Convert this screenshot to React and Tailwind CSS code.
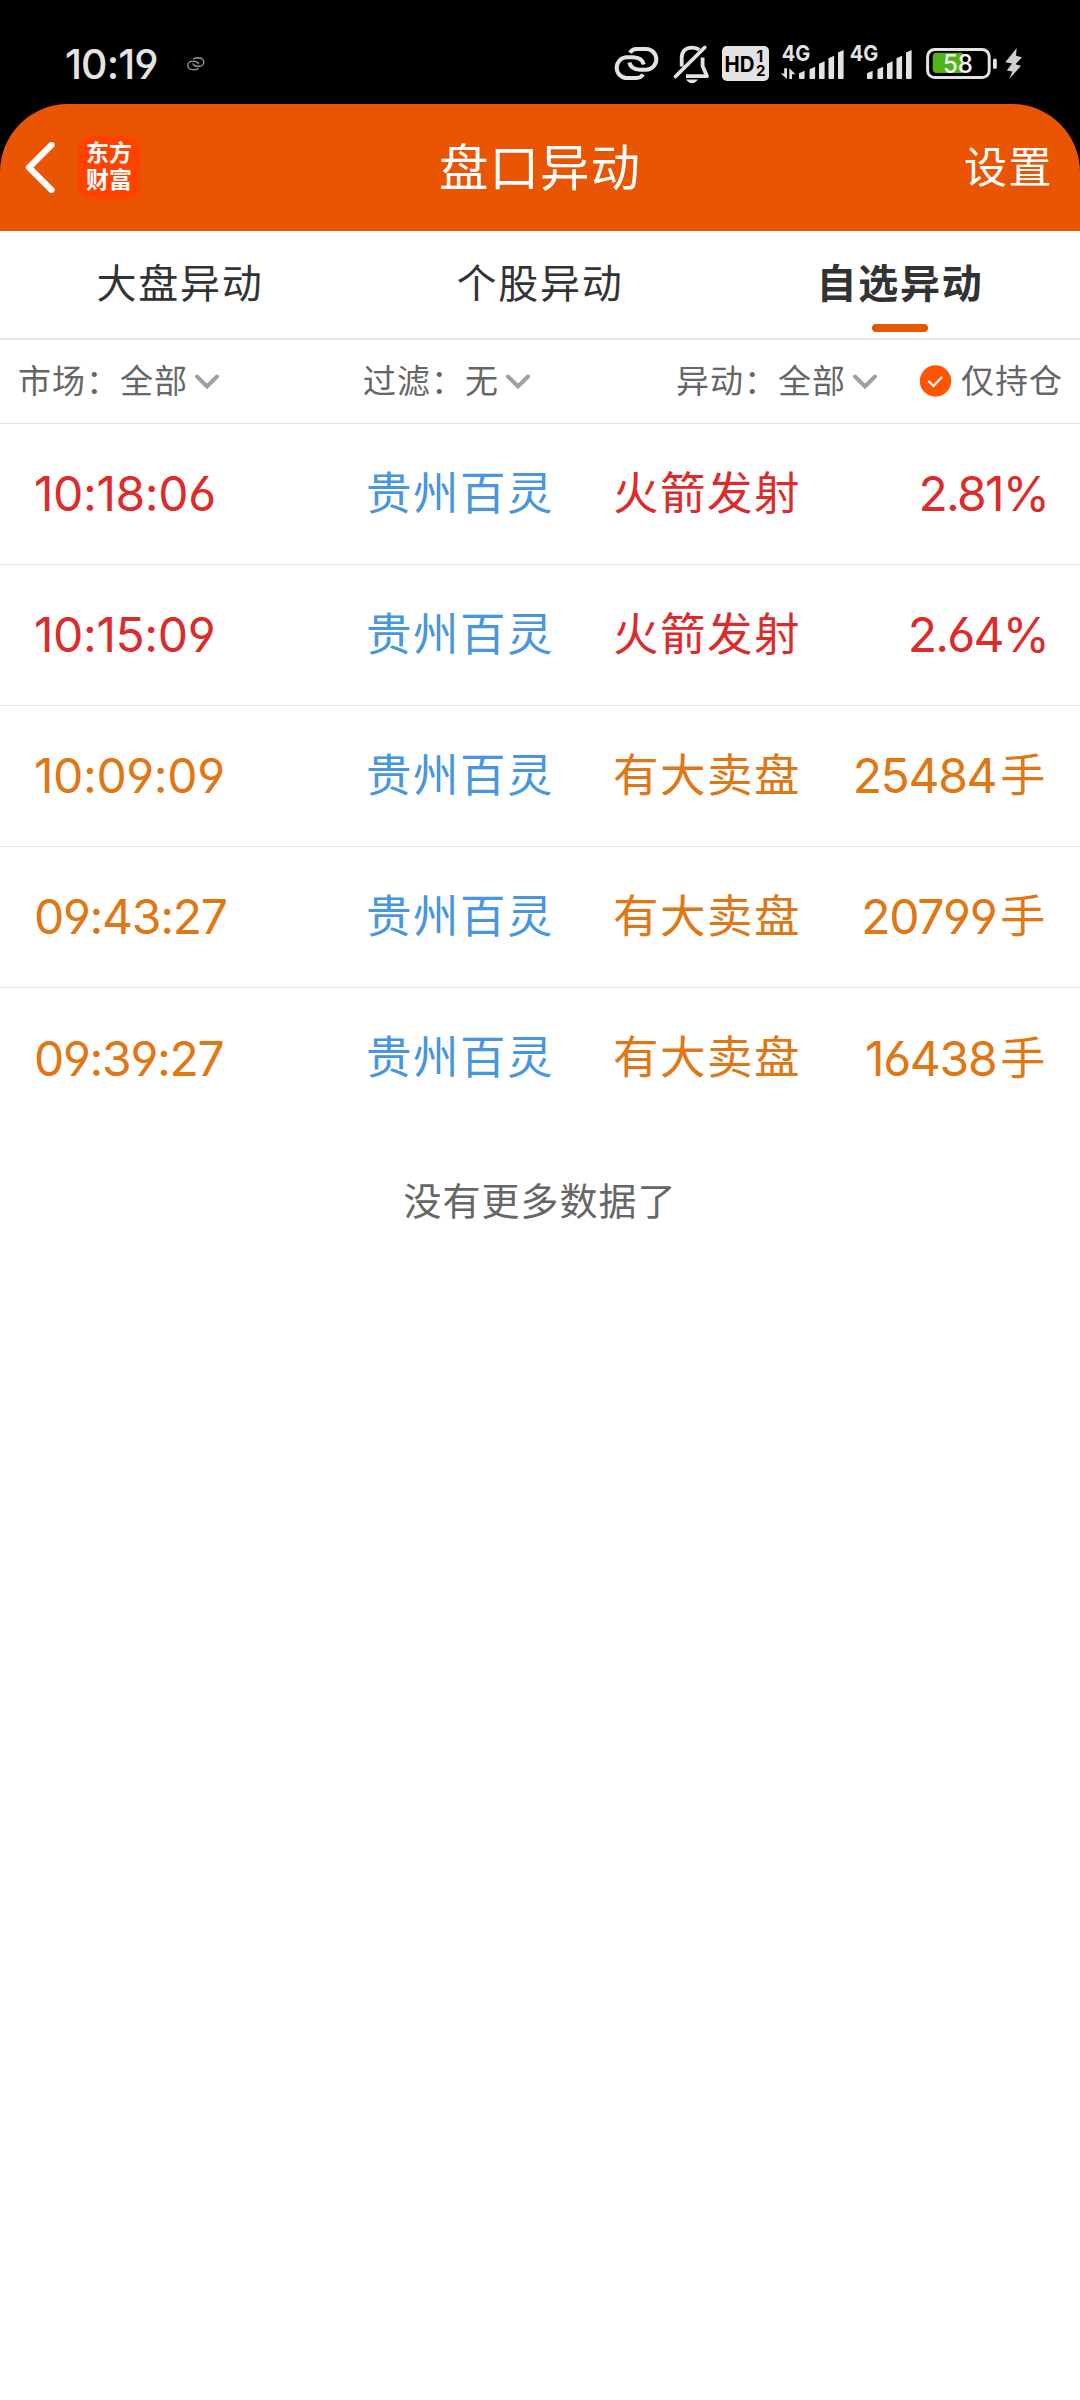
import React, { useState } from 'react';

const tabs = ['大盘异动', '个股异动', '自选异动'];

const rows = [
  { time: '10:18:06', name: '贵州百灵', event: '火箭发射', value: '2.81', unit: '%', type: 'up' },
  { time: '10:15:09', name: '贵州百灵', event: '火箭发射', value: '2.64', unit: '%', type: 'up' },
  { time: '10:09:09', name: '贵州百灵', event: '有大卖盘', value: '25484', unit: '手', type: 'order' },
  { time: '09:43:27', name: '贵州百灵', event: '有大卖盘', value: '20799', unit: '手', type: 'order' },
  { time: '09:39:27', name: '贵州百灵', event: '有大卖盘', value: '16438', unit: '手', type: 'order' },
];

const getTypeColor = (type) => {
  switch (type) {
    case 'up': return 'text-[#dd2b2b]';
    case 'order': return 'text-[#e07614]';
    default: return 'text-[#333333]';
  }
};

const LinkIcon = ({ className, strokeWidth = 4 }) => (
  <svg className={className} viewBox="0 0 50 40" fill="none" stroke="currentColor" strokeWidth={strokeWidth}>
    <path d="M18 8.8Q20 5 24.5 5H34A10.35 10.35 0 0 1 34 25.7H28Q19 25.5 17.3 18.5" />
    <path d="M31 30.4Q29 34 24.5 34H15A10.35 10.35 0 0 1 15 13.3H21Q30 13.5 31.8 20.5" />
  </svg>
);

const BellOffIcon = () => (
  <svg className="ml-[10px] h-10 w-10" viewBox="0 0 40 40" fill="none" stroke="currentColor" strokeWidth="3.8">
    <path d="M9.7 22.5V14C9.7 7 14 3.6 20 3.6C23 3.6 25.5 4.3 27.3 5.8" />
    <path d="M30.6 13.5V22L35 32.2H14" strokeLinejoin="round" />
    <path d="M3.5 32.5L32.7 3.5" strokeLinecap="round" />
    <path d="M14 35.6H26Q23.5 39.2 20 39.2Q16.5 39.2 14 35.6Z" fill="currentColor" stroke="none" />
  </svg>
);

const HdIcon = () => (
  <svg className="ml-[10px] h-10 w-[47px]" viewBox="0 0 47 40">
    <rect y="2" width="47" height="35" rx="5" fill="currentColor" />
    <g fill="#000" fontFamily="Inter" fontWeight="700">
      <text x="2.5" y="27.6" fontSize="21.5" textLength="30" lengthAdjust="spacingAndGlyphs">HD</text>
      <text x="34.5" y="18" fontSize="15.5">1</text>
      <text x="34" y="32" fontSize="15">2</text>
    </g>
  </svg>
);

const bars = [[0, 26.7], [10.5, 22.7], [20, 17.3], [29.5, 11.7], [39, 6]];

const SignalIcon = ({ className, data }) => (
  <svg className={className} viewBox="0 0 66 40" fill="currentColor">
    <text x="0.7" y="17.4" fontSize="21.8" fontFamily="Inter" fontWeight="700" textLength="28.5" lengthAdjust="spacingAndGlyphs">4G</text>
    {bars.map(([x, y]) => (
      <path key={x} d={`M${x + 18} ${y + 2.5}L${x + 23.6} ${y}V34Q${x + 23.6} 35 ${x + 22.6} 35H${x + 19}Q${x + 18} 35 ${x + 18} 34Z`} />
    ))}
    {data && <path d="M3.2 24.3H6V35L-.2 29.5H3.2ZM8.3 24.3L14.5 30.2H11V35H8.3Z" />}
  </svg>
);

const BatteryIcon = () => (
  <svg className="ml-[11px] h-10 w-[72px]" viewBox="0 0 72 40">
    <rect x="1.6" y="5.6" width="61.6" height="28" rx="7" fill="none" stroke="currentColor" strokeWidth="3" />
    <path d="M11 8.7H36.5V29H11Q6.7 29 6.7 25V12.7Q6.7 8.7 11 8.7Z" fill="#52b318" />
    <rect x="67" y="14.5" width="3.8" height="10.5" rx="1.8" fill="currentColor" />
    <text x="17" y="28.8" fontSize="25" fontFamily="Inter" fontWeight="500" fill="#f2f2f2" textLength="30" lengthAdjust="spacingAndGlyphs">58</text>
  </svg>
);

const BoltIcon = () => (
  <svg className="ml-[6px] h-10 w-[20px]" viewBox="0 0 20 40" fill="#d0d0d0">
    <path d="M12.7 4L1.3 18.3L8 19.5L2.8 26.5L8.3 27.5L5.2 35L17 21.8L11.5 20.3L18 13.3L12 11.8Z" />
  </svg>
);

const Chevron = () => (
  <svg className="ml-[6px] h-[16px] w-[26px]" viewBox="0 0 26 16" fill="none" stroke="#a0a0a0" strokeWidth="4" strokeLinecap="round">
    <path d="M3 2.5L13 12.5L23 2.5" />
  </svg>
);

const StatusBar = () => (
  <div className="flex h-[104px] items-start pt-[44px] text-[#e3e3e3]">
    <div className="ml-[65px] w-[121px] text-[41px] leading-[40px] font-medium tracking-[-0.9px]">10:19</div>
    <LinkIcon className="mt-[12px] h-[16px] w-[20px] text-[#9a9a9a]" strokeWidth={3.4} />
    <LinkIcon className="ml-[406px] h-10 w-[50px]" />
    <BellOffIcon />
    <HdIcon />
    <SignalIcon className="ml-[12px] h-10 w-[66px] overflow-visible" data />
    <SignalIcon className="ml-[2px] h-10 w-[66px] overflow-visible" />
    <BatteryIcon />
    <BoltIcon />
  </div>
);

const Filter = ({ label, value, className }) => (
  <div className={`flex items-center ${className}`}>
    <span>{label}：</span>
    <span>{value}</span>
    <Chevron />
  </div>
);

const App = () => {
  const [active, setActive] = useState(2);

  return (
    <div className="h-[2400px] w-[1080px] overflow-hidden bg-white font-['Inter','Noto_Sans_CJK_SC',sans-serif] [font-feature-settings:'cv03','cv04']">
      <div className="bg-black">
        <StatusBar />
        <header className="grid h-[127px] grid-cols-3 items-center rounded-t-[68px] bg-[#ea5504] text-white">
          <div className="flex items-center pl-[23px]">
            <svg className="h-[52px] w-[34px]" viewBox="0 0 34 52" fill="none" stroke="currentColor" strokeWidth="6.2" strokeLinecap="round" strokeLinejoin="round">
              <path d="M28.5 3L6 25.5L28.5 48" />
            </svg>
            <div className="ml-[21px] flex h-[63px] w-[62px] flex-col items-center justify-center rounded-[14px] bg-[#ff4200] pb-[2px] text-[23px] leading-[27px] font-bold">
              <span>东方</span>
              <span>财富</span>
            </div>
          </div>
          <h1 className="pt-px text-center text-[49.5px] tracking-[1px]">盘口异动</h1>
          <div className="pr-[27px] text-right text-[43px] tracking-[1.5px]">设置</div>
        </header>
      </div>

      <nav className="grid h-[109px] grid-cols-3 border-b-2 border-[#e4e4e4] text-[40px] text-[#333333]">
        {tabs.map((tab, index) => (
          <button
            key={tab}
            onClick={() => setActive(index)}
            className={`flex flex-col items-center pt-[23px] leading-[60px] tracking-[1.7px] ${active === index ? 'font-bold' : ''}`}
          >
            {tab}
            {active === index && <span className="mt-[10px] h-[8px] w-[56px] rounded-full bg-[#e65706]" />}
          </button>
        ))}
      </nav>

      <div className="flex h-[84px] items-center border-b border-[#e4e4e4] text-[33px] tracking-[1px] text-[#666666]">
        <Filter label="市场" value="全部" className="ml-[18px] w-[345px]" />
        <Filter label="过滤" value="无" className="w-[313px]" />
        <Filter label="异动" value="全部" className="w-[243px]" />
        <svg className="h-[33px] w-[33px]" viewBox="0 0 33 33" fill="none">
          <circle cx="16.5" cy="16" r="15.7" fill="#ff5500" />
          <path d="M10 16.5L14.5 21L22.5 12.5" stroke="#fff" strokeWidth="2.2" strokeLinecap="round" strokeLinejoin="round" />
        </svg>
        <span className="ml-[9px]">仅持仓</span>
      </div>

      <ul>
        {rows.map((row) => (
          <li key={row.time} className={`flex h-[141px] items-center border-b border-[#e4e4e4] text-[45.5px] tracking-[1.5px] last:border-0 ${getTypeColor(row.type)}`}>
            <span className={`ml-[34px] w-[332px] text-[48px] ${row.time.startsWith('10') ? 'tracking-[-0.4px]' : 'tracking-[-1.3px]'}`}>{row.time}</span>
            <span className="w-[247px] text-[#4796de]">{row.name}</span>
            <span>{row.event}</span>
            {row.unit === '%' ? (
              <span className="mr-[32px] ml-auto text-[48px] tracking-[-1.8px]">{row.value}%</span>
            ) : (
              <span className="mr-[36px] ml-auto flex items-center text-[48px] tracking-[-1.3px]">
                {row.value}
                <span className="ml-[4px] text-[45px]">{row.unit}</span>
              </span>
            )}
          </li>
        ))}
      </ul>

      <p className="pt-[44px] text-center text-[38px] leading-[56px] tracking-[1px] text-[#666666]">没有更多数据了</p>
    </div>
  );
};

export default App;
